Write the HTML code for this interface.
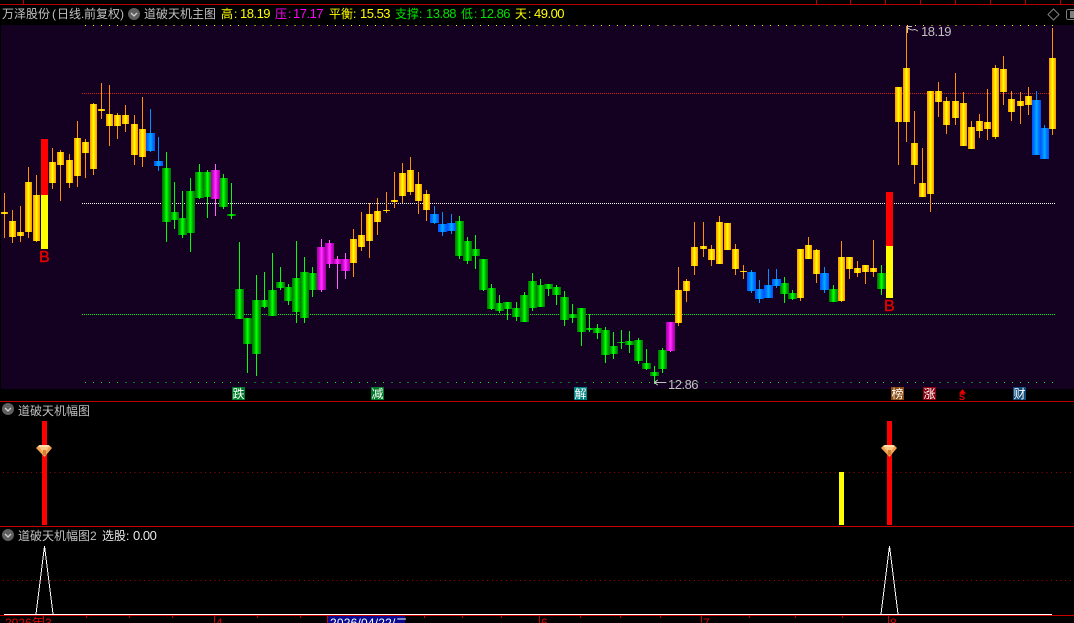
<!DOCTYPE html>
<html><head><meta charset="utf-8"><style>
html,body{margin:0;padding:0;background:#000;width:1074px;height:623px;overflow:hidden}
svg{display:block;position:absolute;left:0;top:0}
text{font-family:"Liberation Sans","WenQuanYi Zen Hei","Noto Sans CJK SC",sans-serif;font-size:12px}
.n{font-size:13px;letter-spacing:-.5px}
.l{font-size:12px}
</style></head><body>
<svg width="1074" height="623" viewBox="0 0 1074 623" xmlns="http://www.w3.org/2000/svg">
<defs>
<linearGradient id="au" x1="0" x2="1" y1="0" y2="0"><stop offset="0" stop-color="#ffa000"/><stop offset=".14" stop-color="#ffa000"/><stop offset=".15" stop-color="#ffc000"/><stop offset=".28" stop-color="#ffc000"/><stop offset=".29" stop-color="#ffe000"/><stop offset=".42" stop-color="#ffe000"/><stop offset=".43" stop-color="#ffff00"/><stop offset=".57" stop-color="#ffff00"/><stop offset=".58" stop-color="#ffe000"/><stop offset=".71" stop-color="#ffe000"/><stop offset=".72" stop-color="#ffc000"/><stop offset=".85" stop-color="#ffc000"/><stop offset=".86" stop-color="#ffa000"/><stop offset="1" stop-color="#ffa000"/></linearGradient>
<linearGradient id="gr" x1="0" x2="1" y1="0" y2="0"><stop offset="0" stop-color="#007000"/><stop offset=".33" stop-color="#00c000"/><stop offset=".44" stop-color="#00ff00"/><stop offset=".56" stop-color="#00ff00"/><stop offset=".67" stop-color="#00c000"/><stop offset="1" stop-color="#007000"/></linearGradient>
<linearGradient id="bl" x1="0" x2="1" y1="0" y2="0"><stop offset="0" stop-color="#0050ff"/><stop offset=".33" stop-color="#0080ff"/><stop offset=".44" stop-color="#00a8ff"/><stop offset=".56" stop-color="#00a8ff"/><stop offset=".67" stop-color="#0080ff"/><stop offset="1" stop-color="#0050ff"/></linearGradient>
<linearGradient id="mg" x1="0" x2="1" y1="0" y2="0"><stop offset="0" stop-color="#a000a0"/><stop offset=".33" stop-color="#e010e0"/><stop offset=".44" stop-color="#ff30ff"/><stop offset=".56" stop-color="#ff30ff"/><stop offset=".67" stop-color="#e010e0"/><stop offset="1" stop-color="#a000a0"/></linearGradient>
</defs>
<rect width="1074" height="623" fill="#000"/>
<rect x="1" y="25" width="1073" height="364" fill="#140020"/>
<g shape-rendering="crispEdges">
<rect x="0" y="4" width="1074" height="1" fill="#b80000"/>
<path d="M23.5 0V4M816.5 0V4M850.5 0V4M885.5 0V4M920.5 0V4M955.5 0V4M990.5 0V4M1025.5 0V4M1060.5 0V4" stroke="#b80000" fill="none"/>
<path d="M85 25.5H1053" stroke="#ffff00" stroke-dasharray="1 7.06" fill="none"/>
<path d="M82 93.5H1056" stroke="#d02020" stroke-dasharray="1 1" fill="none"/>
<path d="M82 203.5H1056" stroke="#ffffff" stroke-dasharray="1 1" fill="none"/>
<path d="M82 314.5H1056" stroke="#00f000" stroke-dasharray="1 1" fill="none"/>
<path d="M85 382.5H1053" stroke="#00f000" stroke-dasharray="1 7.06" fill="none"/>
<!-- wicks -->
<path fill="none" stroke="#ff9000" d="M4.5 193V238M12.5 210V243M20.5 206V242M28.5 167V238M36.5 175V242M52.5 148V189M60.5 150V201M69.5 154V188M77.5 121V187M85.5 139V178M93.5 103V175M101.5 83V119M109.5 85V146M117.5 113V139M125.5 105V132M134.5 115V165M142.5 97V167M353.5 229V277M361.5 212V251M369.5 203V258M377.5 198V235M386.5 192V213M394.5 172V208M402.5 163V203M410.5 157V195M418.5 172V214M426.5 190V221M678.5 267V326M686.5 279V302M694.5 222V275M703.5 222V257M711.5 245V266M719.5 216V264M727.5 223V250M735.5 244V275M743.5 265V279M800.5 249V301M808.5 237V258M816.5 249V283M841.5 241V302M849.5 257V279M857.5 261V277M865.5 265V284M873.5 240V277M898.5 87V165M906.5 26V142M914.5 111V184M922.5 148V197M930.5 91V212M938.5 82V117M946.5 97V134M955.5 73V125M963.5 92V146M971.5 121V149M979.5 114V138M987.5 89V140M995.5 65V139M1003.5 56V105M1011.5 91V121M1020.5 92V124M1028.5 87V115M1052.5 28V135"/>
<path fill="none" stroke="#00ff00" d="M166.5 152V242M174.5 182V229M182.5 191V238M190.5 178V252M199.5 164V199M207.5 170V218M223.5 174V209M231.5 183V219M239.5 242V319M247.5 318V373M256.5 275V376M264.5 272V308M272.5 253V316M280.5 267V290M288.5 284V305M296.5 241V323M304.5 257V323M312.5 267V297M459.5 216V259M467.5 237V264M475.5 235V269M483.5 259V291M491.5 284V310M499.5 295V313M507.5 302V320M516.5 302V321M524.5 292V322M532.5 273V311M540.5 279V307M548.5 284V296M556.5 285V305M564.5 291V326M572.5 304V323M581.5 308V346M589.5 314V332M597.5 324V339M605.5 327V363M613.5 332V359M621.5 330V349M629.5 331V353M638.5 338V364M646.5 349V370M654.5 366V384M662.5 348V373M784.5 277V303M792.5 290V300M833.5 285V302M881.5 265V295"/>
<path fill="none" stroke="#0090ff" d="M150.5 109V152M158.5 137V171M434.5 206V224M442.5 212V236M451.5 214V234M751.5 270V293M759.5 280V303M768.5 269V298M776.5 269V288M824.5 267V293M1036.5 91V155M1044.5 125V159"/>
<path fill="none" stroke="#ff60ff" d="M215.5 164V216M321.5 239V292M329.5 240V268M337.5 256V289M345.5 253V279M670.5 322V352"/>
<!-- gold bodies -->
<g fill="url(#au)">
<rect x="1" y="212" width="7" height="2"/><rect x="9" y="221" width="7" height="16"/><rect x="17" y="232" width="7" height="4"/><rect x="25" y="182" width="7" height="50"/><rect x="33" y="195" width="7" height="46"/><rect x="49" y="162" width="7" height="21"/><rect x="57" y="152" width="7" height="13"/><rect x="66" y="160" width="7" height="23"/><rect x="74" y="138" width="7" height="38"/><rect x="82" y="142" width="7" height="11"/><rect x="90" y="104" width="7" height="65"/><rect x="98" y="109" width="7" height="2"/><rect x="106" y="114" width="7" height="12"/><rect x="114" y="115" width="7" height="11"/><rect x="122" y="115" width="7" height="9"/><rect x="131" y="124" width="7" height="31"/><rect x="139" y="129" width="7" height="28"/>
<rect x="350" y="239" width="7" height="24"/><rect x="358" y="235" width="7" height="12"/><rect x="366" y="214" width="7" height="27"/><rect x="374" y="211" width="7" height="11"/><rect x="383" y="210" width="7" height="1"/><rect x="391" y="200" width="7" height="2"/><rect x="399" y="173" width="7" height="23"/><rect x="407" y="170" width="7" height="22"/><rect x="415" y="184" width="7" height="17"/><rect x="423" y="194" width="7" height="16"/>
<rect x="675" y="290" width="7" height="33"/><rect x="683" y="281" width="7" height="10"/><rect x="691" y="247" width="7" height="19"/><rect x="700" y="246" width="7" height="3"/><rect x="708" y="249" width="7" height="11"/><rect x="716" y="222" width="7" height="42"/><rect x="724" y="223" width="7" height="27"/><rect x="732" y="249" width="7" height="20"/><rect x="740" y="271" width="7" height="1"/>
<rect x="797" y="249" width="7" height="49"/><rect x="805" y="245" width="7" height="14"/><rect x="813" y="250" width="7" height="24"/><rect x="838" y="257" width="7" height="44"/><rect x="846" y="257" width="7" height="12"/><rect x="854" y="268" width="7" height="5"/><rect x="862" y="265" width="7" height="7"/><rect x="870" y="268" width="7" height="4"/>
<rect x="895" y="87" width="7" height="35"/><rect x="903" y="68" width="7" height="54"/><rect x="911" y="143" width="7" height="22"/><rect x="919" y="183" width="7" height="14"/><rect x="927" y="91" width="7" height="103"/><rect x="935" y="91" width="7" height="11"/><rect x="943" y="101" width="7" height="24"/><rect x="952" y="101" width="7" height="17"/><rect x="960" y="103" width="7" height="43"/><rect x="968" y="127" width="7" height="22"/><rect x="976" y="121" width="7" height="10"/><rect x="984" y="122" width="7" height="7"/><rect x="992" y="68" width="7" height="69"/><rect x="1000" y="69" width="7" height="23"/><rect x="1008" y="99" width="7" height="13"/><rect x="1017" y="101" width="7" height="5"/><rect x="1025" y="96" width="7" height="9"/><rect x="1049" y="58" width="7" height="71"/>
</g>
<!-- green bodies -->
<g fill="url(#gr)">
<rect x="162" y="168" width="9" height="54"/><rect x="170" y="212" width="9" height="8"/><rect x="178" y="218" width="9" height="17"/><rect x="186" y="191" width="9" height="42"/><rect x="195" y="172" width="9" height="26"/><rect x="203" y="172" width="9" height="25"/><rect x="219" y="178" width="9" height="29"/><rect x="227" y="214" width="9" height="2"/>
<rect x="235" y="289" width="9" height="30"/><rect x="243" y="318" width="9" height="26"/><rect x="252" y="300" width="9" height="54"/><rect x="260" y="300" width="9" height="7"/><rect x="268" y="290" width="9" height="26"/><rect x="276" y="282" width="9" height="6"/><rect x="284" y="287" width="9" height="14"/><rect x="292" y="278" width="9" height="34"/><rect x="300" y="272" width="9" height="46"/><rect x="308" y="273" width="9" height="17"/>
<rect x="455" y="221" width="9" height="35"/><rect x="463" y="241" width="9" height="20"/><rect x="471" y="249" width="9" height="7"/><rect x="479" y="259" width="9" height="31"/><rect x="487" y="288" width="9" height="21"/><rect x="495" y="303" width="9" height="8"/><rect x="503" y="302" width="9" height="7"/><rect x="512" y="308" width="9" height="9"/><rect x="520" y="295" width="9" height="27"/><rect x="528" y="281" width="9" height="27"/><rect x="536" y="285" width="9" height="22"/><rect x="544" y="284" width="9" height="5"/><rect x="552" y="287" width="9" height="8"/><rect x="560" y="297" width="9" height="23"/><rect x="568" y="314" width="9" height="4"/><rect x="577" y="308" width="9" height="24"/><rect x="585" y="328" width="9" height="2"/><rect x="593" y="328" width="9" height="5"/><rect x="601" y="330" width="9" height="25"/><rect x="609" y="346" width="9" height="8"/><rect x="617" y="342" width="9" height="1"/><rect x="625" y="341" width="9" height="4"/><rect x="634" y="340" width="9" height="21"/><rect x="642" y="363" width="9" height="6"/><rect x="650" y="372" width="9" height="4"/><rect x="658" y="350" width="9" height="19"/>
<rect x="780" y="283" width="9" height="11"/><rect x="788" y="293" width="9" height="6"/><rect x="829" y="289" width="9" height="13"/><rect x="877" y="273" width="9" height="16"/>
</g>
<g fill="url(#bl)">
<rect x="146" y="133" width="9" height="18"/><rect x="154" y="161" width="9" height="5"/><rect x="430" y="214" width="9" height="9"/><rect x="438" y="224" width="9" height="8"/><rect x="447" y="223" width="9" height="8"/><rect x="747" y="272" width="9" height="19"/><rect x="755" y="289" width="9" height="10"/><rect x="764" y="285" width="9" height="13"/><rect x="772" y="279" width="9" height="7"/><rect x="820" y="273" width="9" height="17"/><rect x="1032" y="100" width="9" height="55"/><rect x="1040" y="128" width="9" height="31"/>
</g>
<g fill="url(#mg)">
<rect x="211" y="170" width="9" height="29"/><rect x="317" y="247" width="9" height="43"/><rect x="325" y="243" width="9" height="21"/><rect x="333" y="259" width="9" height="5"/><rect x="341" y="259" width="9" height="12"/><rect x="666" y="322" width="9" height="29"/>
</g>
<!-- signal bars -->
<rect x="41" y="139" width="7" height="56" fill="#ff0000"/><rect x="41" y="195" width="7" height="54" fill="#ffff00"/>
<rect x="886" y="192" width="7" height="54" fill="#ff0000"/><rect x="886" y="246" width="7" height="52" fill="#ffff00"/>
<!-- label squares -->
<rect x="232" y="387" width="13" height="13" fill="#007a28"/>
<rect x="371" y="387" width="13" height="13" fill="#007a28"/>
<rect x="574" y="387" width="13" height="13" fill="#008080"/>
<rect x="891" y="387" width="13" height="13" fill="#8a4a10"/>
<rect x="923" y="387" width="13" height="13" fill="#8a0010"/>
<rect x="1013" y="387" width="13" height="13" fill="#104a78"/>
<!-- separators -->
<rect x="0" y="401" width="1074" height="1" fill="#b80000"/>
<rect x="0" y="526" width="1074" height="1" fill="#c80000"/>
<rect x="0" y="615" width="1074" height="1" fill="#c80000"/>
<path d="M3 472.5H1074M3 580.5H1074" stroke="#a00000" stroke-dasharray="1 3.7" fill="none"/>
<rect x="42" y="421" width="5" height="104" fill="#ff0000"/>
<rect x="887" y="421" width="5" height="104" fill="#ff0000"/>
<rect x="839" y="472" width="5" height="53" fill="#ffff00"/>
<rect x="4" y="614" width="1048" height="1" fill="#fff"/>
<path d="M43.5 615V623M214.5 615V623M327.5 615V623M539.5 615V623M701.5 615V623M888.5 615V623M86.5 615V618M129.5 615V618M172.5 615V618M257.5 615V618M300.5 615V618M424.5 615V618M462.5 615V618M501.5 615V618M580.5 615V618M620.5 615V618M660.5 615V618M749.5 615V618M795.5 615V618M842.5 615V618" stroke="#c80000" fill="none"/>
<rect x="328" y="616" width="77" height="7" fill="#0a0a90"/>
<path d="M36 614L44.5 546L53 614M881 614L889.5 546L898 614" stroke="#fff" fill="none"/>
<path d="M907.5 26V33M907.5 26.5H912M908 28.5L912 30L915 29.5L918 31" stroke="#c0c0c0" fill="none"/>
<path d="M654 382.5H666M654 382.5L658 380M654 382.5L658 385" stroke="#c0c0c0" fill="none"/>
<polygon points="959,393.5 962.5,389 966,393.5" fill="#e00000"/>
<rect x="1066.5" y="9.5" width="12" height="10" rx="2" fill="none" stroke="#808080"/>
<rect x="1070" y="11" width="4" height="7" fill="#808080"/>
</g>
<polygon points="1053.5,9 1059,14.5 1053.5,20 1048,14.5" fill="none" stroke="#808080"/>
<!-- diamonds -->
<g><polygon points="36,448 39,445 49,445 52,448 44.5,457" fill="#f0a050"/><polygon points="39,447 49,447 44.5,454" fill="#ffc880"/><polygon points="40,445 48,445 50,447 38,447" fill="#ffe0b0"/><rect x="43" y="450" width="3" height="5" fill="#d88030"/></g>
<g transform="translate(845 0)"><polygon points="36,448 39,445 49,445 52,448 44.5,457" fill="#f0a050"/><polygon points="39,447 49,447 44.5,454" fill="#ffc880"/><polygon points="40,445 48,445 50,447 38,447" fill="#ffe0b0"/><rect x="43" y="450" width="3" height="5" fill="#d88030"/></g>
<!-- circle icons -->
<g fill="#5f5f5f"><circle cx="134" cy="14" r="6"/><circle cx="8" cy="409" r="6"/><circle cx="8" cy="535" r="6"/></g>
<path d="M131 13L134 16L137 13M5 408L8 411L11 408M5 534L8 537L11 534" stroke="#d0d0d0" stroke-width="1.3" fill="none"/>
<!-- header text -->
<text x="2" y="18" fill="#c0c0c0">万泽股份</text>
<text x="52" y="18" fill="#c0c0c0">(</text><text x="57" y="18" fill="#c0c0c0">日线</text><text x="81" y="18" fill="#c0c0c0">.</text><text x="84" y="18" fill="#c0c0c0">前复权</text><text x="120" y="18" fill="#c0c0c0">)</text>
<text x="144" y="18" fill="#c0c0c0">道破天机主图</text>
<text x="221" y="18" fill="#ffff00">高</text><text x="234" y="18" fill="#ffff00">:</text><text class="n" x="240" y="18" fill="#ffff00">18.19</text>
<text x="275" y="18" fill="#ff00ff">压</text><text x="288" y="18" fill="#ff00ff">:</text><text class="n" x="293" y="18" fill="#ff00ff">17.17</text>
<text x="329" y="18" fill="#ffff00">平衡</text><text x="353" y="18" fill="#ffff00">:</text><text class="n" x="360" y="18" fill="#ffff00">15.53</text>
<text x="395" y="18" fill="#00e000">支撑</text><text x="419" y="18" fill="#00e000">:</text><text class="n" x="426" y="18" fill="#00e000">13.88</text>
<text x="461" y="18" fill="#00e000">低</text><text x="474" y="18" fill="#00e000">:</text><text class="n" x="480" y="18" fill="#00e000">12.86</text>
<text x="515" y="18" fill="#ffff00">天</text><text x="528" y="18" fill="#ffff00">:</text><text class="n" x="534" y="18" fill="#ffff00">49.00</text>
<!-- chart text -->
<text class="n" x="921" y="36" fill="#c0c0c0">18.19</text>
<text class="n" x="668" y="389" fill="#c0c0c0">12.86</text>
<text x="39" y="262" fill="#e00000" stroke="#e00000" stroke-width=".4" style="font-size:16px">B</text>
<text x="884" y="311" fill="#e00000" stroke="#e00000" stroke-width=".4" style="font-size:16px">B</text>
<g fill="#fff">
<text class="l" x="232.5" y="398">跌</text><text class="l" x="371.5" y="398">减</text><text class="l" x="574.5" y="398">解</text><text class="l" x="891.5" y="398">榜</text><text class="l" x="923.5" y="398">涨</text><text class="l" x="1013.5" y="398">财</text>
</g>
<text x="959" y="400" fill="#e00000" stroke="#e00000" stroke-width=".3" style="font-size:12px">s</text>
<!-- panel titles -->
<text x="18" y="415" fill="#c0c0c0">道破天机幅图</text>
<text x="18" y="540" fill="#c0c0c0">道破天机幅图2</text>
<text x="102" y="540" fill="#e8e8e8">选股</text><text x="126" y="540" fill="#e8e8e8">:</text><text class="n" x="133" y="540" fill="#e8e8e8">0.00</text>
<!-- axis text -->
<text x="5" y="627" fill="#e00000">2026年</text><text x="45" y="627" fill="#e00000">3</text>
<text x="216" y="627" fill="#e00000">4</text>
<text x="330" y="627" fill="#fff" style="letter-spacing:.2px">2026/04/22/二</text>
<text x="541" y="627" fill="#e00000">6</text>
<text x="703" y="627" fill="#e00000">7</text>
<text x="890" y="627" fill="#e00000">8</text>
</svg>
</body></html>
